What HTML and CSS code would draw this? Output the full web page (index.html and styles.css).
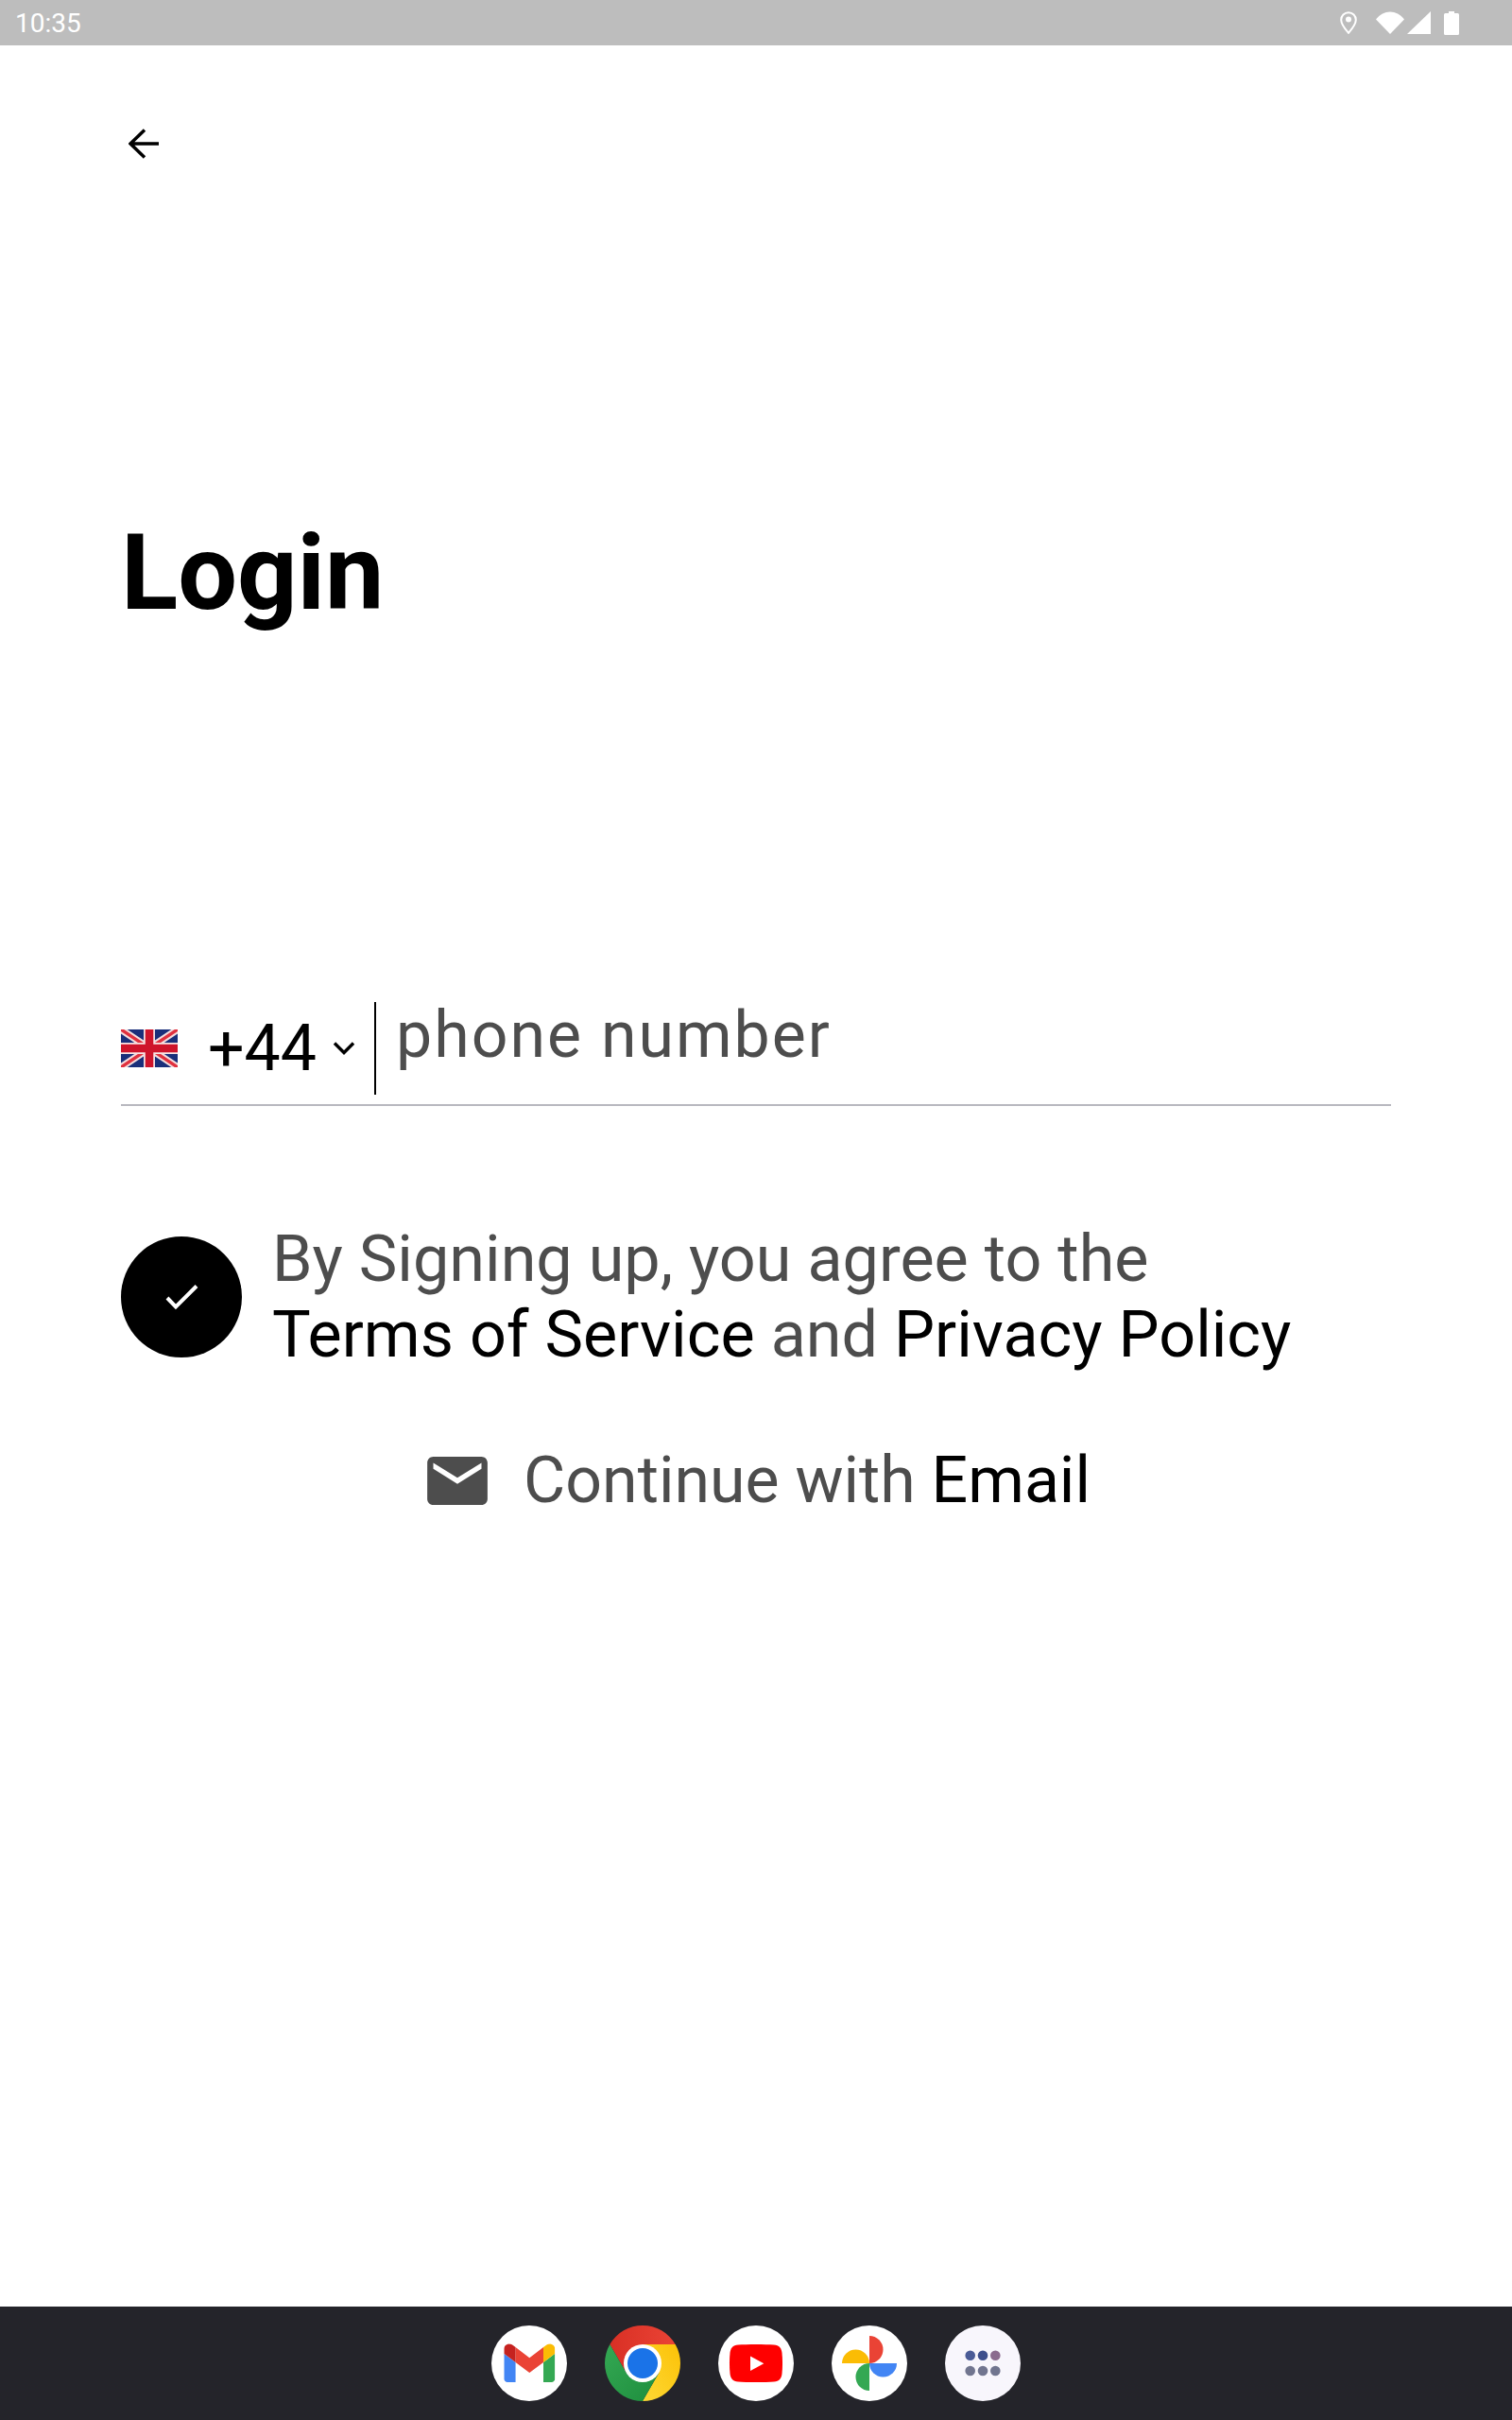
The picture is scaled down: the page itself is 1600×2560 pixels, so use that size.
FILE: index.html
```html
<!DOCTYPE html>
<html lang="en">
<head>
<meta charset="utf-8">
<title>Login</title>
<link rel="stylesheet" href="styles.css">
</head>
<body>
<div class="screen">
  <header class="status">
    <span class="time">10:35</span>
    <svg class="s-pin" viewBox="0 0 18 24"><path d="M9 1.2C4.6 1.2 1.2 4.6 1.2 9c0 3.6 3 8.400 7.800 13.800C13.800 17.400 16.800 12.600 16.800 9 16.800 4.600 13.400 1.200 9 1.200z" fill="none" stroke="#fff" stroke-width="2"/><circle cx="9" cy="8.500" r="3" fill="#fff"/></svg>
    <svg class="s-wifi" viewBox="0 0 30 24"><path d="M0 8.500C8 -2.300 22 -2.300 30 8.500L15 24z" fill="#fff"/></svg>
    <svg class="s-signal" viewBox="0 0 25 24"><path d="M25 0V24H0z" fill="#fff"/></svg>
    <svg class="s-batt" viewBox="0 0 16 25"><path d="M5 0h6v2h3.500A1.500 1.500 0 0 1 16 3.500V23.500A1.500 1.500 0 0 1 14.500 25H1.500A1.500 1.500 0 0 1 0 23.500V3.500A1.500 1.500 0 0 1 1.500 2H5z" fill="#fff"/></svg>
  </header>

  <main class="main">
    <button class="back" aria-label="Back">
      <svg viewBox="0 0 32 32" width="32" height="32"><path d="M32 16H2M17 1.500 2 16l15 14.500" fill="none" stroke="#000" stroke-width="3.500"/></svg>
    </button>

    <h1 class="title">Login</h1>

    <div class="phone">
      <svg class="flag" viewBox="0 0 60 40">
        <rect width="60" height="40" fill="#1a2f7a"/>
        <path d="M0 0 60 40M60 0 0 40" stroke="#f4dede" stroke-width="7.500"/>
        <path d="M0 0 60 40M60 0 0 40" stroke="#e0313f" stroke-width="3.500"/>
        <path d="M30 0V40M0 20H60" stroke="#f7e4e4" stroke-width="12"/>
        <path d="M30 0V40M0 20H60" stroke="#cf142b" stroke-width="8.500"/>
      </svg>
      <span class="code">+44</span>
      <svg class="chev" viewBox="0 0 24 16"><path d="M2 2.500 12 12.500 22 2.500" fill="none" stroke="#000" stroke-width="3.400"/></svg>
      <span class="divider"></span>
      <span class="placeholder">phone number</span>
    </div>

    <div class="agree">
      <span class="check">
        <svg viewBox="0 0 128 128" width="128" height="128"><path d="M49 65l9 9.500 22-22" fill="none" stroke="#fff" stroke-width="4"/></svg>
      </span>
      <p class="agree-text">By Signing up, you agree to the<br><b>Terms of Service</b> and <b>Privacy Policy</b></p>
    </div>

    <div class="email">
      <svg class="mail" viewBox="2 4 20 16"><path d="M20 4H4c-1.100 0-1.990.900-1.990 2L2 18c0 1.100.900 2 2 2h16c1.100 0 2-.900 2-2V6c0-1.100-.900-2-2-2zm0 4l-8 5-8-5V6l8 5 8-5v2z" fill="#4d4d4d"/></svg>
      <span class="email-text">Continue with <b>Email</b></span>
    </div>
  </main>

  <footer class="dock">
    <svg class="app" viewBox="0 0 80 80">
      <circle cx="40" cy="40" r="40" fill="#fff"/>
      <svg x="13.300" y="19.300" width="54" height="40.700" viewBox="52 42 88 66">
        <path fill="#4285f4" d="M58 108h14V74L52 59v43c0 3.320 2.690 6 6 6"/>
        <path fill="#34a853" d="M120 108h14c3.320 0 6-2.690 6-6V59l-20 15"/>
        <path fill="#fbbc04" d="M120 48v26l20-15v-8c0-7.420-8.470-11.650-14.400-7.200"/>
        <path fill="#ea4335" d="M72 74V48l24 18 24-18v26L96 92"/>
        <path fill="#c5221f" d="M52 51v8l20 15V48l-5.600-4.200c-5.940-4.450-14.400-.220-14.400 7.200"/>
      </svg>
    </svg>
    <svg class="app" viewBox="0 0 80 80">
      <defs>
        <linearGradient id="cr" x1="0" y1="0" x2="1" y2="0"><stop offset="0" stop-color="#d93025"/><stop offset="1" stop-color="#ea4335"/></linearGradient>
        <linearGradient id="cy" x1="1" y1="0" x2="0" y2="1"><stop offset="0" stop-color="#fcc207"/><stop offset="1" stop-color="#fdd835"/></linearGradient>
        <linearGradient id="cg" x1="0" y1="0" x2="1" y2="1"><stop offset="0" stop-color="#34a853"/><stop offset="1" stop-color="#1e8e3e"/></linearGradient>
      </defs>
      <path fill="url(#cr)" d="M5.360 20A40 40 0 0 1 74.640 20H40L22.680 50z"/>
      <path fill="url(#cy)" d="M74.640 20A40 40 0 0 1 40 80L57.320 50 40 20z"/>
      <path fill="url(#cg)" d="M40 80A40 40 0 0 1 5.360 20L22.680 50H57.320z"/>
      <circle cx="40" cy="40" r="20" fill="#fff"/>
      <circle cx="40" cy="40" r="16" fill="#1a73e8"/>
    </svg>
    <svg class="app" viewBox="0 0 80 80">
      <circle cx="40" cy="40" r="40" fill="#fff"/>
      <path fill="#f00" d="M21 20.500C30 19.800 50 19.800 59 20.500 64.500 21 67 24 67.500 29 68.200 36 68.200 44 67.500 51 67 56 64.500 59 59 59.500 50 60.200 30 60.200 21 59.500 15.500 59 13 56 12.500 51 11.800 44 11.800 36 12.500 29 13 24 15.500 21 21 20.500z"/>
      <path fill="#fff" d="M34 32.500V48L48.300 40.300z"/>
    </svg>
    <svg class="app" viewBox="0 0 80 80">
      <circle cx="40" cy="40" r="40" fill="#fff"/>
      <path fill="#ea4335" d="M40 11A14.500 14.500 0 0 1 40 40z"/>
      <path fill="#4285f4" d="M69 40A14.500 14.500 0 0 1 40 40z"/>
      <path fill="#34a853" d="M40 69A14.500 14.500 0 0 1 40 40z"/>
      <path fill="#fbbc04" d="M11 40A14.500 14.500 0 0 1 40 40z"/>
    </svg>
    <svg class="app" viewBox="0 0 80 80">
      <circle cx="40" cy="40" r="40" fill="#f8f6fc"/>
      <circle cx="26.700" cy="31.700" r="5.300" fill="#4a5b97"/>
      <circle cx="40" cy="31.700" r="5.300" fill="#3e4f8c"/>
      <circle cx="53.300" cy="31.700" r="5.300" fill="#8b6b8e"/>
      <circle cx="26.700" cy="48" r="5.300" fill="#71758f"/>
      <circle cx="40" cy="48" r="5.300" fill="#71758f"/>
      <circle cx="53.300" cy="48" r="5.300" fill="#71758f"/>
    </svg>
  </footer>
</div>
</body>
</html>
```

FILE: styles.css
```css
* { box-sizing: border-box; }
html, body { margin: 0; padding: 0; background: #fff; }
body { font-family: Roboto, "Liberation Sans", sans-serif; }

.screen {
  width: 1600px;
  height: 2560px;
  display: flex;
  flex-direction: column;
  overflow: hidden;
}

/* status bar */
.status {
  height: 48px;
  flex: none;
  background: #bdbdbd;
  display: flex;
  align-items: center;
  padding: 0 56px 0 16px;
}
.time { font-size: 28px; color: #fff; margin-right: auto; }
.s-pin { width: 18px; height: 24px; margin-right: 20px; }
.s-wifi { width: 30px; height: 24px; margin-right: 3px; }
.s-signal { width: 25px; height: 24px; margin-right: 14px; }
.s-batt { width: 16px; height: 25px; }

/* main content */
.main {
  flex: 1;
  padding: 0 128px;
  display: flex;
  flex-direction: column;
  background: #fff;
}
.back {
  align-self: flex-start;
  margin: 88px 0 0 8px;
  padding: 0;
  border: 0;
  background: none;
  width: 32px;
  height: 32px;
  display: block;
}
.back svg { display: block; }

.title {
  margin: 377px 0 0 0;
  font-size: 111.300px;
  line-height: 122px;
  font-weight: 700;
  color: #000;
}

.phone {
  margin-top: 393px;
  display: flex;
  align-items: center;
  height: 110px;
  padding-bottom: 10px;
  border-bottom: 2px solid #b8b8bf;
}
.flag { width: 60px; height: 40px; flex: none; margin-right: 32px; }
.code { font-size: 68px; line-height: 98px; color: #000; }
.chev { width: 24px; height: 16px; margin: 0 20px 0 17px; flex: none; }
.divider { width: 2px; height: 98px; background: #000; flex: none; }
.placeholder {
  align-self: flex-start;
  margin: 1px 0 0 21px;
  font-size: 68px;
  line-height: 68px;
  letter-spacing: 2px;
  color: #4d4d4d;
}

.agree { display: flex; align-items: center; margin-top: 122px; }
.check {
  width: 128px;
  height: 128px;
  border-radius: 50%;
  background: #000;
  flex: none;
  margin-right: 32px;
}
.check svg { display: block; }
.agree-text {
  margin: 0;
  font-size: 68.300px;
  line-height: 80px;
  color: #4d4d4d;
}
b { font-weight: 400; color: #000; }

.email {
  display: flex;
  align-items: center;
  justify-content: center;
  margin-top: 74px;
  padding-left: 6px;
}
.mail { width: 64px; height: 51px; margin-right: 38px; flex: none; }
.email-text { font-size: 68px; line-height: 80px; color: #4d4d4d; }

/* dock */
.dock {
  height: 120px;
  flex: none;
  background: #24242a;
  display: flex;
  align-items: center;
  justify-content: center;
  gap: 40px;
}
.app { width: 80px; height: 80px; display: block; }
```
